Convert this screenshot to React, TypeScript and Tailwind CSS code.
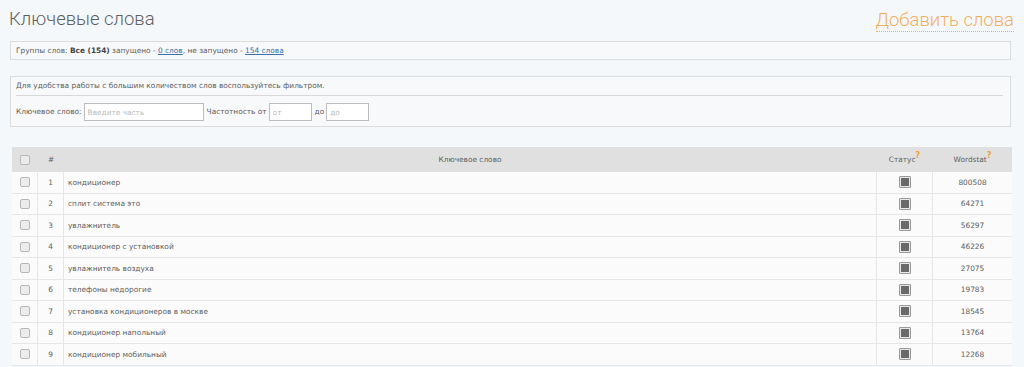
import React from "react";

const rows: [number, string, string][] = [
  [1, "кондиционер", "800508"],
  [2, "сплит система это", "64271"],
  [3, "увлажнитель", "56297"],
  [4, "кондиционер с установкой", "46226"],
  [5, "увлажнитель воздуха", "27075"],
  [6, "телефоны недорогие", "19783"],
  [7, "установка кондиционеров в москве", "18545"],
  [8, "кондиционер напольный", "13764"],
  [9, "кондиционер мобильный", "12268"],
];

function Cb() {
  return <span className="inline-block w-[10px] h-[10px] rounded-[2px] border border-[#b8b8b8] bg-[#ececec]" />;
}

function Status() {
  return (
    <span className="inline-flex items-center justify-center w-[12px] h-[12px] border border-[#9a9a9a] bg-[#e8e8e8] rounded-[1px]">
      <span className="block w-[8px] h-[8px] bg-[#6a6a6a]" />
    </span>
  );
}

export default function App() {
  return (
    <div
      className="w-[1024px] h-[367px] overflow-hidden bg-[#f5f8fa] text-[#606060] text-[7.4px]"
      style={{ fontFamily: '"DejaVu Sans", Verdana, sans-serif' }}
    >
      <div className="flex items-start justify-between pl-[9px] pr-[10px] pt-[6px] h-[40px]">
        <div className="text-[18.5px] font-light text-[#606060] leading-[26px]" style={{ fontFamily: 'Roboto, sans-serif' }}>
          Ключевые слова
        </div>
        <div
          className="text-[18.5px] font-light text-[#f2b05f] leading-[22px] border-b border-dotted border-[#f2b05f] mt-[3px]"
          style={{ fontFamily: 'Roboto, sans-serif' }}
        >
          Добавить слова
        </div>
      </div>

      <div className="ml-[10px] mr-[13px] mt-[1px] h-[19px] border border-[#dcdcdc] bg-[#f7f9fa] flex items-center px-[5px]">
        <span>Группы слов:&nbsp;</span>
        <span className="font-bold text-[#444]">Все (154)</span>
        <span>&nbsp;запущено -&nbsp;</span>
        <span className="underline text-[#3a6fa8]">0 слов</span>
        <span>, не запущено -&nbsp;</span>
        <span className="underline text-[#3a6fa8]">154 слова</span>
      </div>

      <div className="ml-[10px] mr-[13px] mt-[16px] h-[51px] border border-[#dcdcdc] bg-[#f7f9fa] px-[5px]">
        <div className="h-[19px] flex items-center border-b border-[#d8d8d8] mr-[2px]">
          Для удобства работы с большим количеством слов воспользуйтесь фильтром.
        </div>
        <div className="flex items-center mt-[7px] h-[18px]">
          <span>Ключевое слово:</span>
          <input
            className="ml-[2px] w-[120px] h-[18px] border border-[#bdbdbd] bg-white px-[3px] text-[7.4px] placeholder:text-[#bbb] outline-none"
            placeholder="Введите часть"
          />
          <span className="ml-[3px]">Частотность от</span>
          <input
            className="ml-[2px] w-[43px] h-[18px] border border-[#bdbdbd] bg-white px-[3px] text-[7.4px] placeholder:text-[#bbb] outline-none"
            placeholder="от"
          />
          <span className="ml-[3px]">до</span>
          <input
            className="ml-[2px] w-[43px] h-[18px] border border-[#bdbdbd] bg-white px-[3px] text-[7.4px] placeholder:text-[#bbb] outline-none"
            placeholder="до"
          />
        </div>
      </div>

      <div className="ml-[12px] mr-[12px] mt-[20px]">
        <div className="flex h-[25px] bg-[#e0e0e0] items-center">
          <div className="w-[26px] flex justify-center"><Cb /></div>
          <div className="w-[26px] text-center">#</div>
          <div className="flex-1 text-center">Ключевое слово</div>
          <div className="w-[57px] text-center">
            Статус<sup className="text-[#f0a030] font-bold text-[8px]">?</sup>
          </div>
          <div className="w-[79px] text-center">
            Wordstat<sup className="text-[#f0a030] font-bold text-[8px]">?</sup>
          </div>
        </div>
        {rows.map(([n, kw, ws]) => (
          <div key={n} className="flex h-[21.5px] items-center bg-[#fbfbfb] border-b border-[#e6e6e6]">
            <div className="w-[26px] h-full flex items-center justify-center border-r border-[#e6e6e6]"><Cb /></div>
            <div className="w-[26px] h-full flex items-center justify-center border-r border-[#e6e6e6]">{n}</div>
            <div className="flex-1 pl-[4px]">{kw}</div>
            <div className="w-[57px] h-full flex items-center justify-center border-l border-r border-[#e6e6e6]"><Status /></div>
            <div className="w-[79px] text-center">{ws}</div>
          </div>
        ))}
      </div>
    </div>
  );
}
